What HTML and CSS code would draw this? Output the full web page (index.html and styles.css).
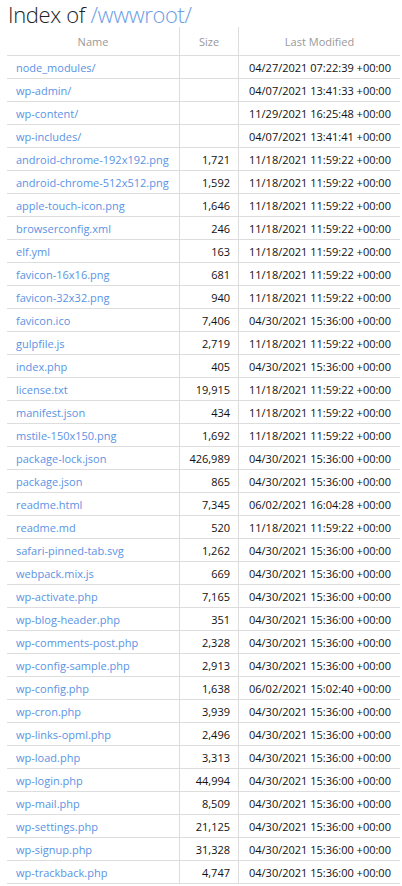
FILE: index.html
```html
<!DOCTYPE html>
<html>
<head>
<meta charset="utf-8">
<title>Index of /wwwroot/</title>
<link rel="stylesheet" href="styles.css">
</head>
<body>
<h1 class="title">Index of <a class="path" href="#">/wwwroot/</a></h1>
<table class="listing">
<thead>
<tr><th class="c-name">Name</th><th class="c-size">Size</th><th class="c-date">Last Modified</th></tr>
</thead>
<tbody>
<tr><td class="c-name"><a href="#">node_modules/</a></td><td class="c-size"></td><td class="c-date">04/27/2021 07:22:39 +00:00</td></tr>
<tr><td class="c-name"><a href="#">wp-admin/</a></td><td class="c-size"></td><td class="c-date">04/07/2021 13:41:33 +00:00</td></tr>
<tr><td class="c-name"><a href="#">wp-content/</a></td><td class="c-size"></td><td class="c-date">11/29/2021 16:25:48 +00:00</td></tr>
<tr><td class="c-name"><a href="#">wp-includes/</a></td><td class="c-size"></td><td class="c-date">04/07/2021 13:41:41 +00:00</td></tr>
<tr><td class="c-name"><a href="#">android-chrome-192x192.png</a></td><td class="c-size">1,721</td><td class="c-date">11/18/2021 11:59:22 +00:00</td></tr>
<tr><td class="c-name"><a href="#">android-chrome-512x512.png</a></td><td class="c-size">1,592</td><td class="c-date">11/18/2021 11:59:22 +00:00</td></tr>
<tr><td class="c-name"><a href="#">apple-touch-icon.png</a></td><td class="c-size">1,646</td><td class="c-date">11/18/2021 11:59:22 +00:00</td></tr>
<tr><td class="c-name"><a href="#">browserconfig.xml</a></td><td class="c-size">246</td><td class="c-date">11/18/2021 11:59:22 +00:00</td></tr>
<tr><td class="c-name"><a href="#">elf.yml</a></td><td class="c-size">163</td><td class="c-date">11/18/2021 11:59:22 +00:00</td></tr>
<tr><td class="c-name"><a href="#">favicon-16x16.png</a></td><td class="c-size">681</td><td class="c-date">11/18/2021 11:59:22 +00:00</td></tr>
<tr><td class="c-name"><a href="#">favicon-32x32.png</a></td><td class="c-size">940</td><td class="c-date">11/18/2021 11:59:22 +00:00</td></tr>
<tr><td class="c-name"><a href="#">favicon.ico</a></td><td class="c-size">7,406</td><td class="c-date">04/30/2021 15:36:00 +00:00</td></tr>
<tr><td class="c-name"><a href="#">gulpfile.js</a></td><td class="c-size">2,719</td><td class="c-date">11/18/2021 11:59:22 +00:00</td></tr>
<tr><td class="c-name"><a href="#">index.php</a></td><td class="c-size">405</td><td class="c-date">04/30/2021 15:36:00 +00:00</td></tr>
<tr><td class="c-name"><a href="#">license.txt</a></td><td class="c-size">19,915</td><td class="c-date">11/18/2021 11:59:22 +00:00</td></tr>
<tr><td class="c-name"><a href="#">manifest.json</a></td><td class="c-size">434</td><td class="c-date">11/18/2021 11:59:22 +00:00</td></tr>
<tr><td class="c-name"><a href="#">mstile-150x150.png</a></td><td class="c-size">1,692</td><td class="c-date">11/18/2021 11:59:22 +00:00</td></tr>
<tr><td class="c-name"><a href="#">package-lock.json</a></td><td class="c-size">426,989</td><td class="c-date">04/30/2021 15:36:00 +00:00</td></tr>
<tr><td class="c-name"><a href="#">package.json</a></td><td class="c-size">865</td><td class="c-date">04/30/2021 15:36:00 +00:00</td></tr>
<tr><td class="c-name"><a href="#">readme.html</a></td><td class="c-size">7,345</td><td class="c-date">06/02/2021 16:04:28 +00:00</td></tr>
<tr><td class="c-name"><a href="#">readme.md</a></td><td class="c-size">520</td><td class="c-date">11/18/2021 11:59:22 +00:00</td></tr>
<tr><td class="c-name"><a href="#">safari-pinned-tab.svg</a></td><td class="c-size">1,262</td><td class="c-date">04/30/2021 15:36:00 +00:00</td></tr>
<tr><td class="c-name"><a href="#">webpack.mix.js</a></td><td class="c-size">669</td><td class="c-date">04/30/2021 15:36:00 +00:00</td></tr>
<tr><td class="c-name"><a href="#">wp-activate.php</a></td><td class="c-size">7,165</td><td class="c-date">04/30/2021 15:36:00 +00:00</td></tr>
<tr><td class="c-name"><a href="#">wp-blog-header.php</a></td><td class="c-size">351</td><td class="c-date">04/30/2021 15:36:00 +00:00</td></tr>
<tr><td class="c-name"><a href="#">wp-comments-post.php</a></td><td class="c-size">2,328</td><td class="c-date">04/30/2021 15:36:00 +00:00</td></tr>
<tr><td class="c-name"><a href="#">wp-config-sample.php</a></td><td class="c-size">2,913</td><td class="c-date">04/30/2021 15:36:00 +00:00</td></tr>
<tr><td class="c-name"><a href="#">wp-config.php</a></td><td class="c-size">1,638</td><td class="c-date">06/02/2021 15:02:40 +00:00</td></tr>
<tr><td class="c-name"><a href="#">wp-cron.php</a></td><td class="c-size">3,939</td><td class="c-date">04/30/2021 15:36:00 +00:00</td></tr>
<tr><td class="c-name"><a href="#">wp-links-opml.php</a></td><td class="c-size">2,496</td><td class="c-date">04/30/2021 15:36:00 +00:00</td></tr>
<tr><td class="c-name"><a href="#">wp-load.php</a></td><td class="c-size">3,313</td><td class="c-date">04/30/2021 15:36:00 +00:00</td></tr>
<tr><td class="c-name"><a href="#">wp-login.php</a></td><td class="c-size">44,994</td><td class="c-date">04/30/2021 15:36:00 +00:00</td></tr>
<tr><td class="c-name"><a href="#">wp-mail.php</a></td><td class="c-size">8,509</td><td class="c-date">04/30/2021 15:36:00 +00:00</td></tr>
<tr><td class="c-name"><a href="#">wp-settings.php</a></td><td class="c-size">21,125</td><td class="c-date">04/30/2021 15:36:00 +00:00</td></tr>
<tr><td class="c-name"><a href="#">wp-signup.php</a></td><td class="c-size">31,328</td><td class="c-date">04/30/2021 15:36:00 +00:00</td></tr>
<tr><td class="c-name"><a href="#">wp-trackback.php</a></td><td class="c-size">4,747</td><td class="c-date">04/30/2021 15:36:00 +00:00</td></tr>
</tbody>
</table>
</body>
</html>
```

FILE: styles.css
```css
html, body {
  margin: 0;
  padding: 0;
  background: #fff;
}
body {
  font-family: "Open Sans", "Noto Sans", "Liberation Sans", sans-serif;
  color: #111;
  padding: 0 2px 0 7px;
}
a {
  color: #5a93e4;
  text-decoration: none;
}
.title {
  margin: 0;
  padding-left: 1px;
  height: 27px;
  font-weight: 300;
  font-size: 22px;
  line-height: 29px;
  color: #222;
  letter-spacing: -0.35px;
}
.title .path {
  color: #6b9de6;
}
.listing {
  width: 393px;
  border-collapse: collapse;
  table-layout: fixed;
  font-size: 11px;
}
.listing th {
  height: 27px;
  padding: 1px 0 0;
  font-weight: 400;
  color: #999;
  text-align: center;
  border-bottom: 1px solid #ddd;
}
.listing td {
  height: 21px;
  padding: 1px 9px 0;
  border-bottom: 1px solid #ddd;
  white-space: nowrap;
  overflow: hidden;
}
.listing th + th,
.listing td + td {
  border-left: 1px solid #ddd;
}
.c-name { width: 172px; }
.c-size { width: 58px; }
.listing td.c-size {
  text-align: right;
  padding-right: 8px;
}
.listing td.c-date {
  padding-left: 10px;
  padding-right: 2px;
}
```
